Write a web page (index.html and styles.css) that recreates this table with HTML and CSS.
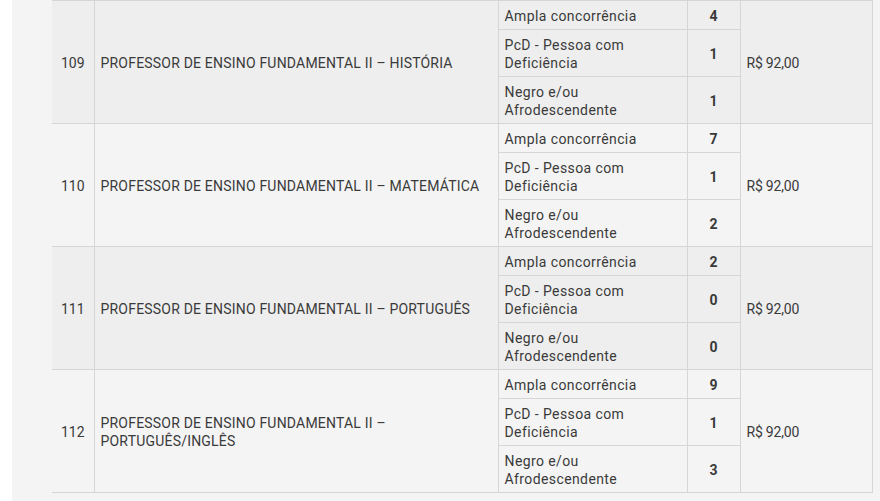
FILE: index.html
```html
<!DOCTYPE html>
<html lang="pt-BR">
<head>
<meta charset="utf-8">
<link rel="stylesheet" href="styles.css">
</head>
<body>
<div class="page">
<table class="vagas">
<colgroup>
<col class="c-num"><col class="c-desc"><col class="c-cat"><col class="c-qtd"><col class="c-val">
</colgroup>
<tbody class="odd">
<tr><td class="num" rowspan="3">109</td><td class="desc" rowspan="3">PROFESSOR DE ENSINO FUNDAMENTAL II – HISTÓRIA</td><td class="cat">Ampla concorrência</td><td class="qtd">4</td><td class="val" rowspan="3">R$ 92,00</td></tr>
<tr><td class="cat">PcD - Pessoa com Deficiência</td><td class="qtd">1</td></tr>
<tr><td class="cat">Negro e/ou Afrodescendente</td><td class="qtd">1</td></tr>
</tbody>
<tbody class="even">
<tr><td class="num" rowspan="3">110</td><td class="desc" rowspan="3">PROFESSOR DE ENSINO FUNDAMENTAL II – MATEMÁTICA</td><td class="cat">Ampla concorrência</td><td class="qtd">7</td><td class="val" rowspan="3">R$ 92,00</td></tr>
<tr><td class="cat">PcD - Pessoa com Deficiência</td><td class="qtd">1</td></tr>
<tr><td class="cat">Negro e/ou Afrodescendente</td><td class="qtd">2</td></tr>
</tbody>
<tbody class="odd">
<tr><td class="num" rowspan="3">111</td><td class="desc" rowspan="3">PROFESSOR DE ENSINO FUNDAMENTAL II – PORTUGUÊS</td><td class="cat">Ampla concorrência</td><td class="qtd">2</td><td class="val" rowspan="3">R$ 92,00</td></tr>
<tr><td class="cat">PcD - Pessoa com Deficiência</td><td class="qtd">0</td></tr>
<tr><td class="cat">Negro e/ou Afrodescendente</td><td class="qtd">0</td></tr>
</tbody>
<tbody class="even">
<tr><td class="num" rowspan="3">112</td><td class="desc" rowspan="3">PROFESSOR DE ENSINO FUNDAMENTAL II –<br>PORTUGUÊS/INGLÊS</td><td class="cat">Ampla concorrência</td><td class="qtd">9</td><td class="val" rowspan="3">R$ 92,00</td></tr>
<tr><td class="cat">PcD - Pessoa com Deficiência</td><td class="qtd">1</td></tr>
<tr><td class="cat">Negro e/ou Afrodescendente</td><td class="qtd">3</td></tr>
</tbody>
</table>
</div>
</body>
</html>
```
FILE: styles.css
```css
html, body {
  margin: 0;
  padding: 0;
  background: #ffffff;
}
.page {
  margin-left: 12px;
  min-height: 501px;
  background: #f4f4f4;
  padding-left: 40px;
  box-sizing: border-box;
}
.vagas {
  border-collapse: collapse;
  table-layout: fixed;
  width: 820px;
  font-family: Roboto, "Open Sans", sans-serif;
  font-size: 14px;
  line-height: 18px;
  color: #3a3a3a;
}
.c-num { width: 42px; }
.c-desc { width: 404px; }
.c-cat { width: 189px; }
.c-qtd { width: 53px; }
.c-val { width: 132px; }
.vagas td {
  border: 1px solid #d6d6d6;
  padding: 6px 6px 4px;
  vertical-align: middle;
}
.vagas td.num {
  border-left: none;
  text-align: center;
}
.odd td { background: #eeeeee; }
.even td { background: #f4f4f4; }
.cat { letter-spacing: 0.4px; }
.qtd {
  text-align: center;
  font-weight: bold;
}
.desc { letter-spacing: 0.2px; }
.val { padding-left: 5px; letter-spacing: -0.2px; }
```
